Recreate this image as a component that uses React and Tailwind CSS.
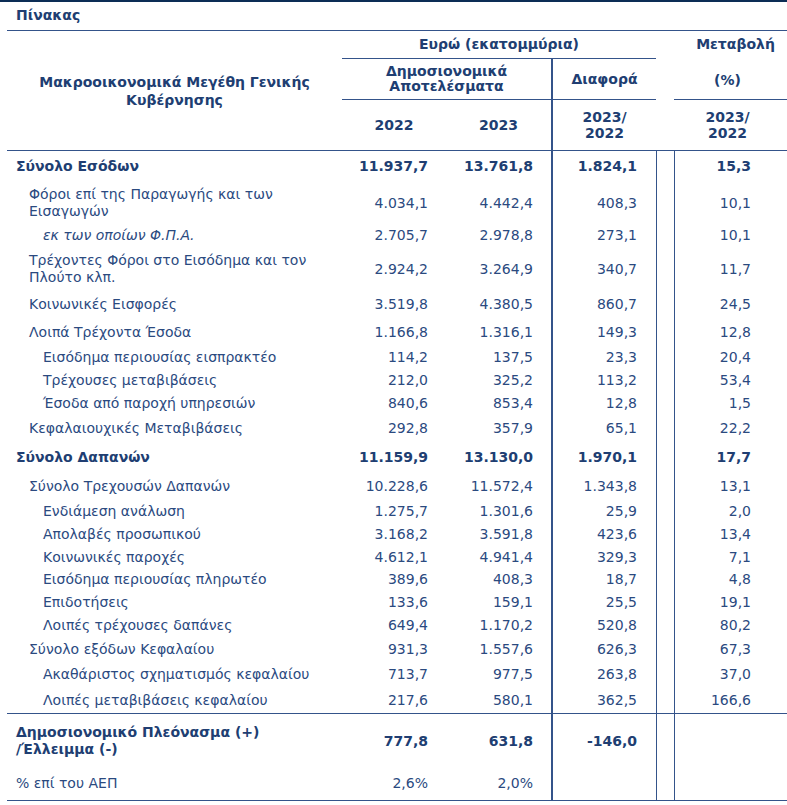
import React from 'react';

const cols = 'grid grid-cols-[335px_104px_105px_105px_18px_123px]';

const rows = [
  { l: 'Σύνολο Εσόδων', v: ['11.937,7', '13.761,8', '1.824,1', '15,3'], lv: 0, b: true, h: 'h-[31px]' },
  { l: ['Φόροι επί της Παραγωγής και των', 'Εισαγωγών'], v: ['4.034,1', '4.442,4', '408,3', '10,1'], lv: 1, h: 'h-[42px]' },
  { l: 'εκ των οποίων Φ.Π.Α.', v: ['2.705,7', '2.978,8', '273,1', '10,1'], lv: 2, i: true, h: 'h-[23px]' },
  { l: ['Τρέχοντες Φόροι στο Εισόδημα και τον', 'Πλούτο κλπ.'], v: ['2.924,2', '3.264,9', '340,7', '11,7'], lv: 1, h: 'h-[44px]' },
  { l: 'Κοινωνικές Εισφορές', v: ['3.519,8', '4.380,5', '860,7', '24,5'], lv: 1, h: 'h-[27px]' },
  { l: 'Λοιπά Τρέχοντα Έσοδα', v: ['1.166,8', '1.316,1', '149,3', '12,8'], lv: 1, h: 'h-[28px]' },
  { l: 'Εισόδημα περιουσίας εισπρακτέο', v: ['114,2', '137,5', '23,3', '20,4'], lv: 2, h: 'h-[23px]' },
  { l: 'Τρέχουσες μεταβιβάσεις', v: ['212,0', '325,2', '113,2', '53,4'], lv: 2, h: 'h-[23px]' },
  { l: 'Έσοδα από παροχή υπηρεσιών', v: ['840,6', '853,4', '12,8', '1,5'], lv: 2, h: 'h-[23px]' },
  { l: 'Κεφαλαιουχικές Μεταβιβάσεις', v: ['292,8', '357,9', '65,1', '22,2'], lv: 1, h: 'h-[27px]' },
  { l: 'Σύνολο Δαπανών', v: ['11.159,9', '13.130,0', '1.970,1', '17,7'], lv: 0, b: true, h: 'h-[30px]' },
  { l: 'Σύνολο Τρεχουσών Δαπανών', v: ['10.228,6', '11.572,4', '1.343,8', '13,1'], lv: 1, h: 'h-[28px]' },
  { l: 'Ενδιάμεση ανάλωση', v: ['1.275,7', '1.301,6', '25,9', '2,0'], lv: 2, h: 'h-[23px]' },
  { l: 'Απολαβές προσωπικού', v: ['3.168,2', '3.591,8', '423,6', '13,4'], lv: 2, h: 'h-[23px]' },
  { l: 'Κοινωνικές παροχές', v: ['4.612,1', '4.941,4', '329,3', '7,1'], lv: 2, h: 'h-[22px]' },
  { l: 'Εισόδημα περιουσίας πληρωτέο', v: ['389,6', '408,3', '18,7', '4,8'], lv: 2, h: 'h-[23px]' },
  { l: 'Επιδοτήσεις', v: ['133,6', '159,1', '25,5', '19,1'], lv: 2, h: 'h-[23px]' },
  { l: 'Λοιπές τρέχουσες δαπάνες', v: ['649,4', '1.170,2', '520,8', '80,2'], lv: 2, h: 'h-[23px]' },
  { l: 'Σύνολο εξόδων Κεφαλαίου', v: ['931,3', '1.557,6', '626,3', '67,3'], lv: 1, h: 'h-[25px]' },
  { l: 'Ακαθάριστος σχηματισμός κεφαλαίου', v: ['713,7', '977,5', '263,8', '37,0'], lv: 2, h: 'h-[25px]' },
  { l: 'Λοιπές μεταβιβάσεις κεφαλαίου', v: ['217,6', '580,1', '362,5', '166,6'], lv: 2, h: 'h-[26px]' },
];

const indent = ['pl-[9px]', 'pl-[22px]', 'pl-[36px]'];

function Row({ label, v, lv, bold, italic, h, extra = '' }) {
  const weight = bold ? 'font-bold text-[#203e72]' : '';
  return (
    <div className={`${cols} ${h} ${extra}`}>
      <div className={`flex items-center whitespace-nowrap leading-[17px] ${indent[lv]} ${weight} ${italic ? 'italic' : ''}`}>
        <div>
          {Array.isArray(label) ? label.map((t, k) => <div key={k}>{t}</div>) : label}
        </div>
      </div>
      <div className={`flex items-center justify-end pr-[18px] ${weight}`}>{v[0]}</div>
      <div className={`flex items-center justify-end pr-[18px] ${weight}`}>{v[1]}</div>
      <div className={`flex items-center justify-end pr-[19px] border-l-2 border-[#34538a] ${weight}`}>{v[2]}</div>
      <div className="border-l border-[#34538a]" />
      <div className={`flex items-center justify-end pr-[46px] border-l border-[#34538a] ${weight}`}>{v[3]}</div>
    </div>
  );
}

export default function App() {
  return (
    <div className="w-[787px] h-[805px] overflow-hidden bg-white font-['DejaVu_Sans',sans-serif] text-[14px] text-[#2b4a7f]">
      <div className="h-[2px] w-full bg-[#0c2d55]" />
      <div className="h-[28px] flex items-center pl-[16px] pb-[2px] font-bold text-[#203e72]">Πίνακας</div>

      <div className="ml-[7px] w-[790px]">
        <div className={`${cols} grid-rows-[27px_41px_51px] border-t border-b border-[#34538a] font-bold text-[#203e72] text-center`}>
          <div className="col-start-1 row-start-1 row-span-3 flex items-center justify-center leading-[18px]">
            <div>Μακροοικονομικά Μεγέθη Γενικής<br />Κυβέρνησης</div>
          </div>
          <div className="col-start-2 col-span-3 row-start-1 flex items-center justify-center">Ευρώ (εκατομμύρια)</div>
          <div className="col-start-6 row-start-1 flex items-center justify-center">Μεταβολή</div>

          <div className="col-start-2 col-span-2 row-start-2 flex items-center justify-center border-t border-[#34538a] leading-[15px]">
            <div>Δημοσιονομικά<br />Αποτελέσματα</div>
          </div>
          <div className="col-start-4 row-start-2 flex items-center justify-center border-t border-l-2 border-[#34538a]">Διαφορά</div>
          <div className="col-start-6 row-start-2 flex items-center justify-center pr-[16px] pt-[4px]">(%)</div>

          <div className="col-start-2 row-start-3 flex items-center justify-center border-t border-[#34538a]">2022</div>
          <div className="col-start-3 row-start-3 flex items-center justify-center border-t border-[#34538a]">2023</div>
          <div className="col-start-4 row-start-3 flex items-center justify-center border-t border-l-2 border-[#34538a] leading-[16px]">
            <div>2023/<br />2022</div>
          </div>
          <div className="col-start-6 row-start-3 flex items-center justify-center pr-[16px] border-t border-[#34538a] leading-[16px]">
            <div>2023/<br />2022</div>
          </div>
        </div>

        {rows.map((r, k) => (
          <Row key={k} label={r.l} v={r.v} lv={r.lv} bold={r.b} italic={r.i} h={r.h} />
        ))}

        <Row
          label={['Δημοσιονομικό Πλεόνασμα (+)', '/Έλλειμμα (-)']}
          v={['777,8', '631,8', '-146,0', '']}
          lv={0}
          bold
          h="h-[54px]"
          extra="border-t border-[#34538a] leading-[16px]"
        />
        <Row label="% επί του ΑΕΠ" v={['2,6%', '2,0%', '', '']} lv={0} h="h-[34px]" extra="border-b border-[#34538a]" />
      </div>
    </div>
  );
}
